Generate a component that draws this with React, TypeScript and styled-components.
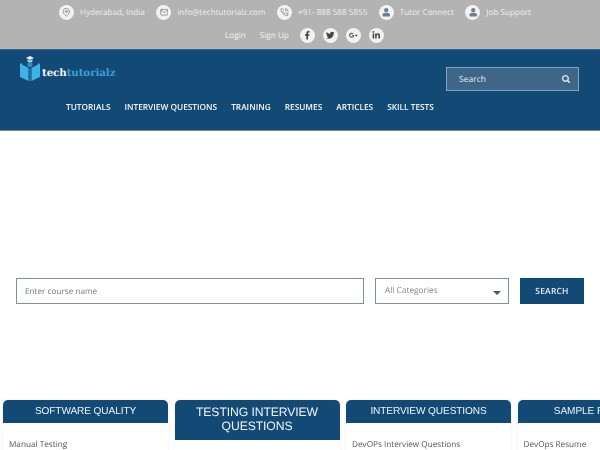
import React from "react";
import styled, { createGlobalStyle } from "styled-components";
import { FaFacebookF, FaTwitter, FaGooglePlusG, FaLinkedinIn, FaUser, FaSearch } from "react-icons/fa";
import { FiMapPin, FiMail, FiPhoneCall } from "react-icons/fi";

const Global = createGlobalStyle`
  html, body { margin: 0; padding: 0; background: #fff; overflow: hidden; }
  body {
    width: 600px;
    height: 450px;
    font-family: "Open Sans", "Liberation Sans", sans-serif;
    text-rendering: geometricPrecision;
  }
  * { box-sizing: border-box; }
`;

const Page = styled.div`
  width: 600px;
  height: 450px;
  overflow: hidden;
  filter: blur(0.35px);
`;

const TopBar = styled.div`
  height: 49px;
  background: #b3b3b3;
  padding-top: 5px;
`;

const ContactRow = styled.div`
  display: flex;
  align-items: center;
  height: 15px;
  padding-left: 59px;
  gap: 11.5px;
`;

const AccountRow = styled.div`
  display: flex;
  align-items: center;
  height: 15px;
  margin-top: 8px;
  padding-left: 225px;
`;

const Contact = styled.div`
  display: flex;
  align-items: center;
  gap: 6px;
  color: #eeeeee;
  font-size: 8.15px;
  white-space: nowrap;
`;

const Round = styled.span`
  width: 15px;
  height: 15px;
  border-radius: 50%;
  background: #f2f2f2;
  color: #6f7f8c;
  display: inline-flex;
  align-items: center;
  justify-content: center;
  font-size: 8.5px;
  flex: none;
`;

const AccountLink = styled.span`
  color: #f2f2f2;
  font-size: 8.2px;
  margin-right: 14px;
`;

const Socials = styled.div`
  display: flex;
  gap: 8px;
  margin-left: -3px;
`;

const Social = styled(Round)`
  color: #444;
`;

const Header = styled.header`
  height: 82px;
  background: #134a75;
  border-top: 1px solid #2f6792;
  border-bottom: 1px solid #6d8ba3;
  padding: 5px 0 0 19px;
`;

const HeaderTop = styled.div`
  display: flex;
  justify-content: space-between;
  align-items: flex-start;
  height: 43px;
  padding-right: 21px;
`;

const Logo = styled.div`
  display: flex;
  align-items: flex-end;
  gap: 1px;
  height: 27px;
`;

const LogoText = styled.div`
  font-family: "DejaVu Serif", "Liberation Serif", serif;
  font-weight: 700;
  font-size: 10.3px;
  color: #f2f6f9;
  letter-spacing: -0.1px;
  line-height: 12px;
  margin-bottom: 3px;
`;

const LogoAccent = styled.span`
  color: #3f9fd6;
`;

const HeaderSearch = styled.div`
  width: 133px;
  height: 24px;
  margin-top: 12px;
  border: 1px solid #7fa6c0;
  background: #3e6689;
  display: flex;
  align-items: center;
  justify-content: space-between;
  padding: 0 8px 0 12px;
  color: #e6edf2;
  font-size: 8.5px;
`;

const Nav = styled.nav`
  display: flex;
  gap: 14px;
  padding-left: 47px;
  margin-top: 4px;
`;

const NavItem = styled.span`
  color: #f2f6f9;
  font-size: 8.3px;
  font-weight: 600;
  white-space: nowrap;
`;

const SearchForm = styled.div`
  display: flex;
  padding: 147px 0 0 16px;
`;

const CourseInput = styled.div`
  width: 348px;
  height: 26px;
  border: 1px solid #7d9299;
  color: #777;
  font-size: 8.2px;
  display: flex;
  align-items: center;
  padding: 1px 0 0 8px;
`;

const CategorySelect = styled.div`
  width: 134px;
  height: 26px;
  margin-left: 11px;
  border: 1px solid #7d9299;
  color: #888;
  font-size: 8.3px;
  display: flex;
  align-items: center;
  justify-content: space-between;
  padding: 0 7px 1px 9px;
`;

const Caret = styled.span`
  width: 0;
  height: 0;
  border-left: 4px solid transparent;
  border-right: 4px solid transparent;
  border-top: 4px solid #555;
  margin-top: 5px;
`;

const SearchButton = styled.div`
  width: 64px;
  height: 26px;
  margin-left: 11px;
  background: #134a75;
  color: #e9eff3;
  font-size: 8.5px;
  font-weight: 600;
  letter-spacing: 0.2px;
  display: flex;
  align-items: center;
  justify-content: center;
`;

const Cards = styled.div`
  display: flex;
  align-items: flex-start;
  gap: 6.5px;
  padding: 96px 0 0 3px;
  width: 900px;
`;

const Card = styled.section`
  width: 165px;
  flex: none;
  height: 80px;
  border-radius: 5px 5px 0 0;
  box-shadow: 0 0 4px rgba(0, 0, 0, 0.06);
`;

const CardTitle = styled.h3<{ $big?: boolean }>`
  margin: 0;
  background: #134a75;
  border-radius: 5px 5px 0 0;
  color: #eef3f6;
  font-family: "Liberation Sans", Arial, sans-serif;
  font-weight: 400;
  text-align: center;
  font-size: ${(p) => (p.$big ? 12.2 : 10.1)}px;
  line-height: ${(p) => (p.$big ? 14 : 20)}px;
  letter-spacing: -0.1px;
  padding: ${(p) => (p.$big ? "5px 8px 7px" : "2px 8px 1px")};
  white-space: ${(p) => (p.$big ? "normal" : "nowrap")};
`;

const CardLink = styled.div`
  color: #555;
  font-size: 8.2px;
  padding: 16px 6px 0;
  white-space: nowrap;
`;

function BookLogo() {
  return (
    <svg width="22" height="27" viewBox="0 0 22 27">
      <path d="M7 3l4-2 4 2-4 2z" fill="#e8f3f8" />
      <path d="M8.500 4.500v2c1.500 1 3.500 1 5 0v-2l-2.500 1.200z" fill="#c9dfe9" />
      <circle cx="11" cy="9.500" r="2.600" fill="#2f93c4" />
      <path d="M1 9l2-1v1.500l6.500 3.500v13L1 22z" fill="#3fb2e6" />
      <path d="M21 9l-2-1v1.500L12.500 13v13L21 22z" fill="#3fb2e6" />
      <path d="M10 13.500h2V26h-2z" fill="#1d6f9e" />
    </svg>
  );
}

const contacts = [
  { icon: <FiMapPin />, text: "Hyderabad, India" },
  { icon: <FiMail />, text: "info@techtutorialz.com" },
  { icon: <FiPhoneCall />, text: "+91- 888 588 5855" },
  { icon: <FaUser />, text: "Tutor Connect" },
  { icon: <FaUser />, text: "Job Support" },
];

const navItems = ["TUTORIALS", "INTERVIEW QUESTIONS", "TRAINING", "RESUMES", "ARTICLES", "SKILL TESTS"];

const cards = [
  { title: "SOFTWARE QUALITY", link: "Manual Testing" },
  { title: "TESTING INTERVIEW QUESTIONS", link: "", big: true },
  { title: "INTERVIEW QUESTIONS", link: "DevOPs Interview Questions" },
  { title: "SAMPLE RESUMES", link: "DevOps Resume" },
];

export default function App() {
  return (
    <Page>
      <Global />
      <TopBar>
        <ContactRow>
          {contacts.map((c) => (
            <Contact key={c.text}>
              <Round>{c.icon}</Round>
              {c.text}
            </Contact>
          ))}
        </ContactRow>
        <AccountRow>
          <AccountLink>Login</AccountLink>
          <AccountLink>Sign Up</AccountLink>
          <Socials>
            <Social><FaFacebookF /></Social>
            <Social><FaTwitter /></Social>
            <Social><FaGooglePlusG /></Social>
            <Social><FaLinkedinIn /></Social>
          </Socials>
        </AccountRow>
      </TopBar>
      <Header>
        <HeaderTop>
          <Logo>
            <BookLogo />
            <LogoText>tech<LogoAccent>tutorialz</LogoAccent></LogoText>
          </Logo>
          <HeaderSearch>
            Search
            <FaSearch />
          </HeaderSearch>
        </HeaderTop>
        <Nav>
          {navItems.map((n) => <NavItem key={n}>{n}</NavItem>)}
        </Nav>
      </Header>
      <SearchForm>
        <CourseInput>Enter course name</CourseInput>
        <CategorySelect>All Categories<Caret /></CategorySelect>
        <SearchButton>SEARCH</SearchButton>
      </SearchForm>
      <Cards>
        {cards.map((c) => (
          <Card key={c.title}>
            <CardTitle $big={c.big}>{c.title}</CardTitle>
            {c.link && <CardLink>{c.link}</CardLink>}
          </Card>
        ))}
      </Cards>
    </Page>
  );
}
